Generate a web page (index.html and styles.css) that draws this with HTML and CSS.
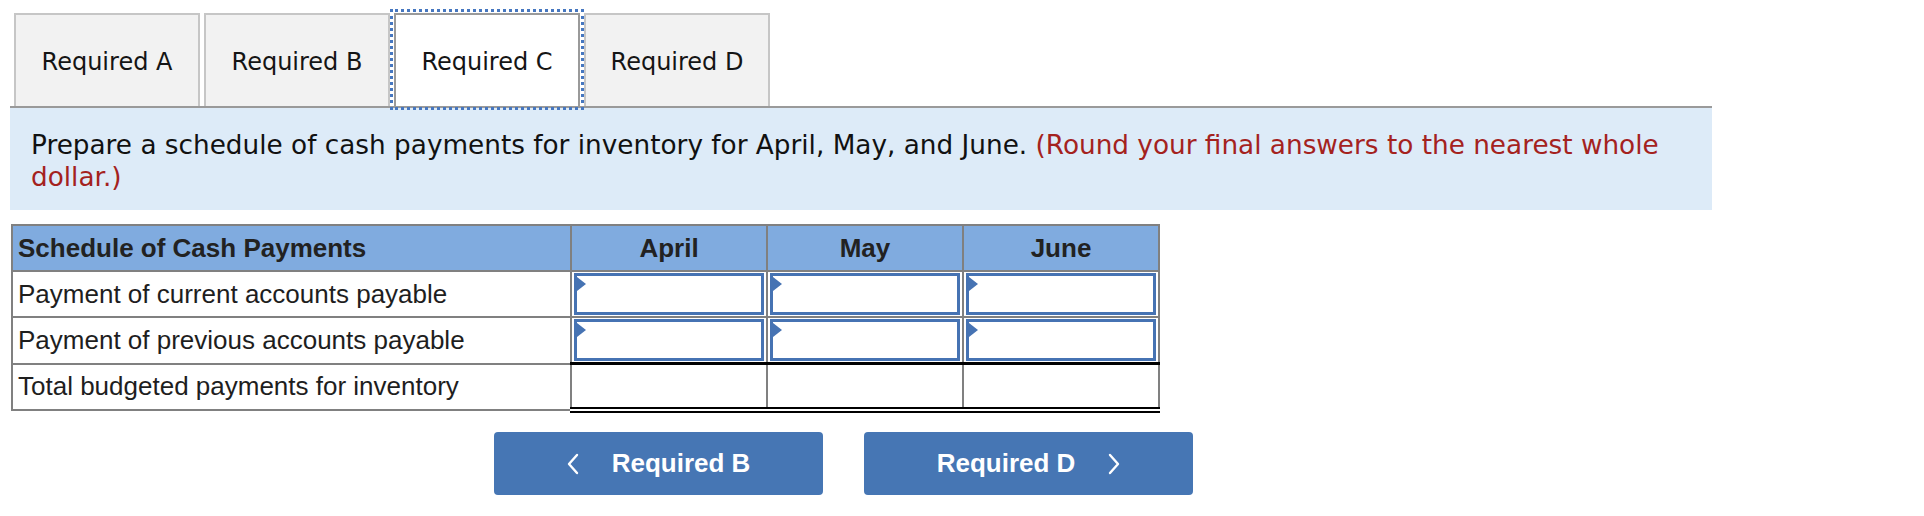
FILE: index.html
```html
<!DOCTYPE html>
<html lang="en">
<head>
<meta charset="utf-8">
<title>Required C</title>
<link rel="stylesheet" href="styles.css">
</head>
<body>
<div class="page">
  <div class="tabs">
    <div class="tab">Required A</div>
    <div class="tab">Required B</div>
    <div class="tab active">Required C</div>
    <div class="tab">Required D</div>
  </div>
  <div class="panel">
    <p>Prepare a schedule of cash payments for inventory for April, May, and June. <span class="note">(Round your final answers to the nearest whole dollar.)</span></p>
  </div>
  <table class="sched">
    <colgroup>
      <col class="c-label">
      <col class="c-val">
      <col class="c-val">
      <col class="c-val">
    </colgroup>
    <thead>
      <tr>
        <th class="lbl">Schedule of Cash Payments</th>
        <th>April</th>
        <th>May</th>
        <th>June</th>
      </tr>
    </thead>
    <tbody>
      <tr>
        <td class="lbl">Payment of current accounts payable</td>
        <td class="in"><div class="box"></div></td>
        <td class="in"><div class="box"></div></td>
        <td class="in"><div class="box"></div></td>
      </tr>
      <tr>
        <td class="lbl">Payment of previous accounts payable</td>
        <td class="in"><div class="box"></div></td>
        <td class="in"><div class="box"></div></td>
        <td class="in"><div class="box"></div></td>
      </tr>
      <tr class="total">
        <td class="lbl">Total budgeted payments for inventory</td>
        <td class="tot"></td>
        <td class="tot"></td>
        <td class="tot"></td>
      </tr>
    </tbody>
  </table>
  <div class="nav">
    <button class="btn"><svg class="chev" viewBox="0 0 12 22" width="12" height="22"><polyline points="10,2 2,11 10,20" fill="none" stroke="#fff" stroke-width="2.4" stroke-linecap="round" stroke-linejoin="round"/></svg><span>Required B</span></button>
    <button class="btn"><span>Required D</span><svg class="chev" viewBox="0 0 12 22" width="12" height="22"><polyline points="2,2 10,11 2,20" fill="none" stroke="#fff" stroke-width="2.4" stroke-linecap="round" stroke-linejoin="round"/></svg></button>
  </div>
</div>
</body>
</html>
```

FILE: styles.css
```css
html, body {
  margin: 0;
  padding: 0;
  background: #ffffff;
}

.page {
  padding: 13px 0 0 10px;
  width: 1702px;
}

.tabs {
  display: flex;
  gap: 4px;
  margin-left: 4px;
}

.tab {
  box-sizing: border-box;
  width: 186px;
  height: 93px;
  border: 2px solid #c6c6c6;
  border-bottom: none;
  background: #f2f2f2;
  display: flex;
  align-items: center;
  justify-content: center;
  font-family: "DejaVu Sans", Verdana, sans-serif;
  font-size: 24px;
  color: #151515;
  padding-top: 3px;
}

.tab.active {
  background: #ffffff;
  border-color: #9a9a9a;
  outline: 3px dotted #4677c0;
  outline-offset: 1px;
  position: relative;
  z-index: 1;
}

.panel {
  border-top: 2px solid #9a9a9a;
  background: #ddebf8;
  padding: 21px 21px 17px 21px;
}

.panel p {
  margin: 0;
  font-family: "DejaVu Sans", Verdana, sans-serif;
  font-size: 26.3px;
  line-height: 32px;
  color: #111111;
}

.panel .note {
  color: #a4221e;
}

.sched {
  margin: 14px 0 0 1px;
  border-collapse: collapse;
  border: 2px solid #808080;
  width: 1147px;
  table-layout: fixed;
  font-family: "Liberation Sans", Arial, sans-serif;
  font-size: 26px;
  color: #1e1e1e;
}

.c-label { width: 559px; }
.c-val { width: 196px; }

.sched th,
.sched td {
  border: 2px solid #808080;
  padding: 0;
}

.sched th {
  background: #80abdf;
  font-weight: bold;
  height: 44px;
  text-align: center;
  color: #222222;
}

.sched th.lbl,
.sched td.lbl {
  text-align: left;
  padding-left: 5px;
}

.sched td {
  height: 44px;
}

.sched td.in {
  height: 42px;
  padding: 1px 2px;
}

.box {
  position: relative;
  box-sizing: border-box;
  height: 42px;
  border: 3px solid #4673b3;
  background: #ffffff;
}

.box::before {
  content: "";
  position: absolute;
  left: 0;
  top: 1px;
  border-left: 9px solid #4673b3;
  border-top: 7px solid transparent;
  border-bottom: 7px solid transparent;
}

.sched tr.total td {
  height: 42px;
}

.sched td.tot {
  border-top: 3px solid #000000;
  border-bottom: 6px double #000000;
}

.nav {
  display: flex;
  gap: 41px;
  margin-top: 19px;
  padding-left: 484px;
}

.btn {
  box-sizing: border-box;
  width: 329px;
  height: 63px;
  border: none;
  border-radius: 4px;
  background: #4676b4;
  color: #ffffff;
  font-family: "Liberation Sans", Arial, sans-serif;
  font-weight: bold;
  font-size: 26px;
  display: flex;
  align-items: center;
  justify-content: center;
  gap: 33px;
  padding: 0;
}

.chev {
  display: block;
}
```
